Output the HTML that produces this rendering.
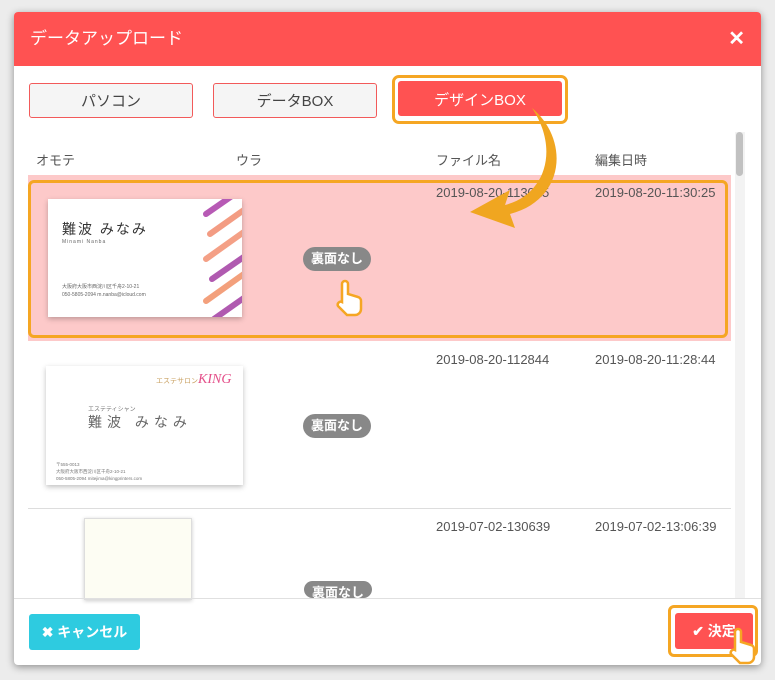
<!DOCTYPE html><html><head><meta charset="utf-8"><style>
body{margin:0;width:775px;height:680px;background:#ececec;font-family:"Liberation Sans","Noto Sans CJK JP",sans-serif;position:relative;overflow:hidden;color:#555}
.a{position:absolute}
.modal{left:14px;top:12px;width:747px;height:653px;background:#fff;border-radius:4px;box-shadow:0 2px 8px rgba(0,0,0,.4);overflow:hidden}
.hd{left:0;top:0;width:747px;height:54px;background:#ff5252;color:#fff;font-size:17px;line-height:54px;padding-left:16px;box-sizing:border-box}
.tab{height:35px;width:164px;border:1px solid #f25a5a;border-radius:3px;background:#f5f5f5;box-sizing:border-box;text-align:center;line-height:35px;font-size:15px;color:#444}
.pill{background:#888;color:#fff;font-size:13px;font-weight:bold;border-radius:12px;width:68px;height:24px;line-height:24px;text-align:center}
.t{font-size:13px;color:#555}
</style></head><body>
<div class="a modal">
<div class="a hd">データアップロード<span class="a" style="right:16px;top:0;font-size:20px;font-weight:bold">✕</span></div>
<div class="a tab" style="left:15px;top:71px">パソコン</div>
<div class="a tab" style="left:199px;top:71px">データBOX</div>
<div class="a" style="left:378px;top:63px;width:176px;height:49px;border:3px solid #f5a623;border-radius:7px;box-sizing:border-box;background:#fff"></div>
<div class="a tab" style="left:384px;top:69px;background:#ff5252;border-color:#ff5252;color:#fff;width:164px;line-height:37px">デザインBOX</div>
<div class="a t" style="left:22px;top:138px">オモテ</div>
<div class="a t" style="left:222px;top:138px">ウラ</div>
<div class="a t" style="left:422px;top:138px">ファイル名</div>
<div class="a t" style="left:581px;top:138px">編集日時</div>
<div class="a" style="left:721px;top:120px;width:10px;height:466px;background:#f3f3f3"></div>
<div class="a" style="left:722px;top:120px;width:7px;height:44px;background:#c1c1c1;border-radius:4px"></div>
<div class="a" style="left:14px;top:163px;width:703px;height:166px;background:#fdc9c9"></div>
<div class="a" style="left:14px;top:168px;width:700px;height:158px;border:3px solid #f5a623;border-radius:6px;box-sizing:border-box"></div>
<div class="a" style="left:34px;top:187px;width:194px;height:118px;background:#fff;box-shadow:0 2px 5px rgba(0,0,0,.25);overflow:hidden">
<div class="a" style="left:14px;top:20px;font-size:14px;color:#333;letter-spacing:2px">難波 みなみ</div>
<div class="a" style="left:14px;top:40px;font-size:5px;color:#666;letter-spacing:1px">Minami Nanba</div>
<div class="a" style="left:14px;top:84px;font-size:5px;color:#666;line-height:8px">大阪府大阪市西淀川区千舟2-10-21<br>050-5805-2094 m.nanba@icloud.com</div>
<svg class="a" style="left:150px;top:0" width="44" height="118"><g stroke-linecap="round" stroke-width="6"><line x1="8" y1="15" x2="44" y2="-10" stroke="#b75ab5"/><line x1="12" y1="35" x2="50" y2="8" stroke="#f39c83"/><line x1="8" y1="60" x2="50" y2="30" stroke="#f4a086"/><line x1="14" y1="80" x2="50" y2="55" stroke="#b05ab0"/><line x1="8" y1="102" x2="50" y2="72" stroke="#f3a07c"/><line x1="16" y1="120" x2="50" y2="96" stroke="#b05ab0"/></g></svg>
</div>
<div class="a pill" style="left:289px;top:235px">裏面なし</div>
<div class="a t" style="left:422px;top:173px">2019-08-20-113025</div>
<div class="a t" style="left:581px;top:173px">2019-08-20-11:30:25</div>
<div class="a" style="left:14px;top:496px;width:703px;height:1px;background:#ddd"></div>
<div class="a" style="left:32px;top:354px;width:197px;height:119px;background:#fff;box-shadow:0 2px 5px rgba(0,0,0,.25)">
<div class="a" style="left:110px;top:6px;font-size:14px;color:#e4508a;font-style:italic;font-family:'Liberation Serif',serif;white-space:nowrap"><span style="font-size:7px;color:#c9a060;font-style:normal">エステサロン</span>KING</div>
<div class="a" style="left:42px;top:38px;font-size:6px;color:#777;white-space:nowrap">エステティシャン</div>
<div class="a" style="left:42px;top:46px;font-size:14px;color:#666;letter-spacing:5px;white-space:nowrap">難波 みなみ</div>
<div class="a" style="left:10px;top:95px;font-size:4.5px;color:#777;line-height:7px;white-space:nowrap">〒555-0013<br>大阪府大阪市西淀川区千舟2-10-21<br>050-5805-2094 mitejima@kingprinters.com</div>
</div>
<div class="a pill" style="left:289px;top:402px">裏面なし</div>
<div class="a t" style="left:422px;top:340px">2019-08-20-112844</div>
<div class="a t" style="left:581px;top:340px">2019-08-20-11:28:44</div>
<div class="a" style="left:70px;top:506px;width:106px;height:80px;background:#fdfdf3;border:1px solid #ddd;box-shadow:0 1px 4px rgba(0,0,0,.2)"></div>
<div class="a pill" style="left:290px;top:569px;height:17px;overflow:hidden;line-height:24px">裏面なし</div>
<div class="a t" style="left:422px;top:507px">2019-07-02-130639</div>
<div class="a t" style="left:581px;top:507px">2019-07-02-13:06:39</div>
<div class="a" style="left:0;top:586px;width:747px;height:1px;background:#e0e0e0"></div>
<div class="a" style="left:15px;top:602px;width:111px;height:36px;background:#2ecbe0;border-radius:3px;color:#fff;font-size:14px;font-weight:bold;line-height:36px;text-align:center">✖ キャンセル</div>
<div class="a" style="left:654px;top:593px;width:90px;height:52px;border:3px solid #f5a623;border-radius:6px;box-sizing:border-box"></div>
<div class="a" style="left:661px;top:601px;width:78px;height:36px;background:#ff5252;border-radius:3px;color:#fff;font-size:14px;font-weight:bold;line-height:36px;text-align:center">✔ 決定</div>
</div>
<svg class="a" style="left:0;top:0" width="775" height="680">
<path d="M532 108 C560 150 545 195 505 205 L510 190 L470 212 L515 228 L510 214 C565 200 570 140 532 108Z" fill="#f0a620"/>
<g fill="#fff" stroke="#f5a623" stroke-width="2.5"><path d="M342 292 v-8 a3 3 0 0 1 6 0 v10 l10 3 a4 4 0 0 1 3 4 v8 a6 6 0 0 1 -6 6 h-8 l-9 -9 a3 3 0 0 1 4 -4 z"/><path d="M735 640 v-8 a3 3 0 0 1 6 0 v10 l10 3 a4 4 0 0 1 3 4 v8 a6 6 0 0 1 -6 6 h-8 l-9 -9 a3 3 0 0 1 4 -4 z"/></g>
</svg>
</body></html>
